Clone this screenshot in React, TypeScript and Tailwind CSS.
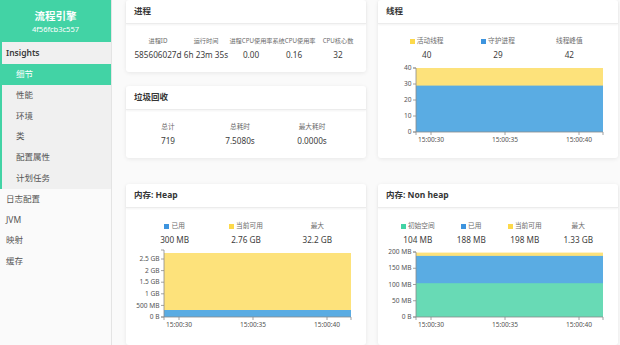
import React from 'react';

const FONT = '"Noto Sans", "Noto Sans CJK SC", sans-serif';

const insightItems = ['细节', '性能', '环境', '类', '配置属性', '计划任务'];
const topItems = ['日志配置', 'JVM', '映射', '缓存'];

type Tick = { y: number; label: string };
type Band = { y: number; color: string };

// svg starts 10px inside the card, plot runs from card+38 to card+225
const xTicks = [
  { x: 43, label: '15:00:30' },
  { x: 117, label: '15:00:35' },
  { x: 191, label: '15:00:40' },
];

const AreaChart: React.FC<{ yTicks: Tick[]; bands: Band[]; top: number }> = ({ yTicks, bands, top }) => {
  const left = 28;
  const right = 215;
  const bottom = 70;
  return (
    <svg width={218} height={84} className="block" style={{ fontFamily: FONT }}>
      {bands.map((b, i) => (
        <rect key={i} x={left} y={b.y} width={right - left} height={bottom - b.y} fill={b.color} />
      ))}
      <path d={`M25,${top}H${left}V${bottom}H25`} fill="none" stroke="#8a8a8a" strokeWidth={0.8} />
      {yTicks.map(t => (
        <g key={t.label}>
          <line x1={25} x2={left} y1={t.y} y2={t.y} stroke="#8a8a8a" strokeWidth={0.8} />
          <text x={23.5} y={t.y} dy="0.33em" textAnchor="end" fontSize={6.6} fill="#555">
            {t.label}
          </text>
        </g>
      ))}
      <path d={`M${left},73V${bottom}H${right}V73`} fill="none" stroke="#8a8a8a" strokeWidth={0.8} />
      {xTicks.map(t => (
        <g key={t.label}>
          <line x1={t.x} x2={t.x} y1={bottom} y2={73} stroke="#8a8a8a" strokeWidth={0.8} />
          <text x={t.x} y={80} textAnchor="middle" fontSize={6.6} fill="#555">
            {t.label}
          </text>
        </g>
      ))}
    </svg>
  );
};

const Card: React.FC<{ title: string; children: React.ReactNode }> = ({ title, children }) => (
  <div className="bg-white rounded-[3px] shadow-[0_1px_4px_rgba(0,0,0,0.08)] flex flex-col">
    <div className="h-[24px] flex items-center pl-[8px] text-[8.5px] font-bold text-[#363636] border-b border-[#ececec] shadow-[0_1px_2px_rgba(0,0,0,0.05)]">
      {title}
    </div>
    {children}
  </div>
);

const Stat: React.FC<{ label: string; value: string; color?: string; small?: boolean }> = ({ label, value, color, small }) => (
  <div className="flex flex-col items-center whitespace-nowrap">
    <div className={`h-[10px] flex items-center text-[#6b6b6b] ${small ? 'text-[6.2px]' : 'text-[6.7px]'}`}>
      {color && <span className="inline-block w-[5px] h-[5px] mr-[2px]" style={{ background: color }} />}
      {label}
    </div>
    <div className="h-[12px] mt-[3px] flex items-center text-[8.2px] text-[#3d3d3d]">{value}</div>
  </div>
);

const BLUE = '#5aace3';
const YELLOW = '#fde27b';
const GREEN = '#68dab5';

export default function App() {
  return (
    <div className="flex w-[620px] h-[345px] overflow-hidden bg-[#fafafa]" style={{ fontFamily: FONT }}>
      <aside className="w-[112px] shrink-0 flex flex-col bg-[#fafafa] border-r border-[#e4e4e4]">
        <div className="h-[42px] bg-[#42d3a5] flex flex-col items-center justify-center text-white">
          <div className="text-[10.5px] font-bold leading-[14px]">流程引擎</div>
          <div className="text-[7.5px] leading-[10px] mt-[1px]">4f56fcb3c557</div>
        </div>
        <div className="bg-[#f0f0f0] border-l-2 border-[#42d3a5]">
          <div className="h-[22px] flex items-center pl-[4px] text-[8.5px] font-semibold text-[#3a3a3a]">Insights</div>
          {insightItems.map((item, i) => (
            <div
              key={item}
              className={`h-[20.8px] flex items-center pl-[14px] text-[8.5px] ${
                i === 0 ? 'bg-[#42d3a5] text-white -ml-[2px] pl-[16px]' : 'text-[#555]'
              }`}
            >
              {item}
            </div>
          ))}
        </div>
        {topItems.map(item => (
          <div key={item} className="h-[20.8px] flex items-center pl-[6px] text-[8.5px] text-[#555]">
            {item}
          </div>
        ))}
      </aside>

      <main className="flex-1 pl-[14px] pr-[2px]">
        <div className="grid grid-cols-[240px_240px] gap-x-[12px] gap-y-[26px]">
          <div className="flex flex-col gap-[14px]">
            <Card title="进程">
              <div className="grid grid-cols-[42px_54px_36px_50px_38px] pl-[11px] pt-[12px] pb-[11px]">
                <Stat small label="进程ID" value="585606027d" />
                <Stat small label="运行时间" value="6h 23m 35s" />
                <Stat small label="进程CPU使用率" value="0.00" />
                <Stat small label="系统CPU使用率" value="0.16" />
                <Stat small label="CPU核心数" value="32" />
              </div>
            </Card>
            <Card title="垃圾回收">
              <div className="grid grid-cols-3 pl-[6px] pr-[18px] pt-[12px] pb-[11px]">
                <Stat label="总计" value="719" />
                <Stat label="总耗时" value="7.5080s" />
                <Stat label="最大耗时" value="0.0000s" />
              </div>
            </Card>
          </div>

          <Card title="线程">
            <div className="grid grid-cols-3 px-[13px] pt-[12px]">
              <Stat label="活动线程" value="40" color="#fdd94a" />
              <Stat label="守护进程" value="29" color="#3d94de" />
              <Stat label="线程峰值" value="42" />
            </div>
            <div className="px-[10px] mt-[1px]">
              <AreaChart
                top={6}
                bands={[
                  { y: 6, color: YELLOW },
                  { y: 23.6, color: BLUE },
                ]}
                yTicks={[
                  { y: 70, label: '0' },
                  { y: 54, label: '10' },
                  { y: 38, label: '20' },
                  { y: 22, label: '30' },
                  { y: 6, label: '40' },
                ]}
              />
            </div>
          </Card>

          <Card title="内存: Heap">
            <div className="grid grid-cols-3 px-[13px] pt-[13px]">
              <Stat label="已用" value="300 MB" color="#3d94de" />
              <Stat label="当前可用" value="2.76 GB" color="#fdd94a" />
              <Stat label="最大" value="32.2 GB" />
            </div>
            <div className="px-[10px] mt-[1px] pb-[14px]">
              <AreaChart
                top={3}
                bands={[
                  { y: 6, color: YELLOW },
                  { y: 63, color: BLUE },
                ]}
                yTicks={[
                  { y: 70, label: '0 B' },
                  { y: 58.4, label: '500 MB' },
                  { y: 46.8, label: '1 GB' },
                  { y: 35.2, label: '1.5 GB' },
                  { y: 23.6, label: '2 GB' },
                  { y: 12, label: '2.5 GB' },
                ]}
              />
            </div>
          </Card>

          <Card title="内存: Non heap">
            <div className="grid grid-cols-4 px-[13px] pt-[13px]">
              <Stat label="初始空间" value="104 MB" color="#42d3a5" />
              <Stat label="已用" value="188 MB" color="#3d94de" />
              <Stat label="当前可用" value="198 MB" color="#fdd94a" />
              <Stat label="最大" value="1.33 GB" />
            </div>
            <div className="px-[10px] mt-[1px] pb-[14px]">
              <AreaChart
                top={5}
                bands={[
                  { y: 5.6, color: YELLOW },
                  { y: 8.9, color: BLUE },
                  { y: 36.2, color: GREEN },
                ]}
                yTicks={[
                  { y: 70, label: '0 B' },
                  { y: 53.75, label: '50 MB' },
                  { y: 37.5, label: '100 MB' },
                  { y: 21.25, label: '150 MB' },
                  { y: 5, label: '200 MB' },
                ]}
              />
            </div>
          </Card>
        </div>
      </main>
    </div>
  );
}
